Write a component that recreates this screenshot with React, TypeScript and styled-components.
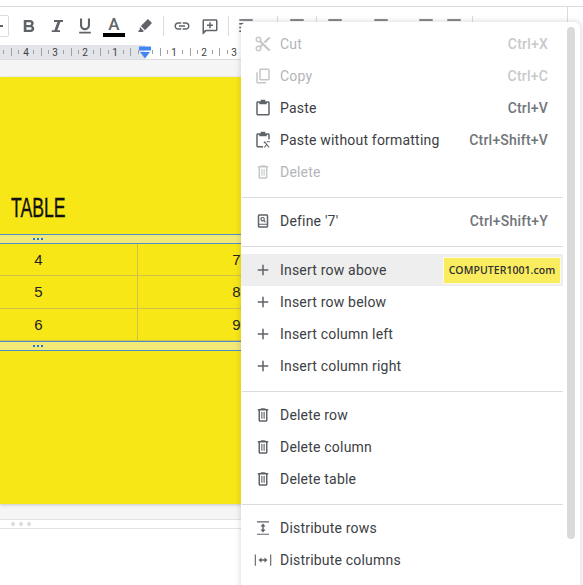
import styled, { createGlobalStyle } from "styled-components"

const GlobalStyle = createGlobalStyle`
    html, body {
        margin: 0;
        padding: 0;
        background: #fff;
        font-family: Roboto, "Liberation Sans", sans-serif;
    }
`

const Page = styled.div`
    position: relative;
    width: 583px;
    height: 585px;
    overflow: hidden;
    background: #fff;
`

const TopGap = styled.div`
    height: 6px;
    border-bottom: 1px solid #dadce0;
`

const Toolbar = styled.div`
    display: flex;
    align-items: center;
    height: 38px;
`

const ZoomBox = styled.div`
    width: 9px;
    height: 22px;
    box-sizing: border-box;
    margin-right: 6px;
    border: 1px solid #dadce0;
    border-left: none;
    border-radius: 0 2px 2px 0;
    display: flex;
    align-items: center;
    &::before {
        content: "";
        width: 3px;
        height: 2px;
        background: #5f6368;
    }
`

const ToolButton = styled.div<{ $after?: number; $size?: number }>`
    flex: none;
    width: 28px;
    height: 28px;
    margin-right: ${(p) => p.$after ?? 0}px;
    display: flex;
    align-items: center;
    justify-content: center;
    svg {
        width: ${(p) => p.$size ?? 18}px;
        height: ${(p) => p.$size ?? 18}px;
        fill: #5f6368;
    }
`

const ToolDivider = styled.div<{ $before: number; $after: number }>`
    flex: none;
    width: 1px;
    height: 20px;
    margin: 0 ${(p) => p.$after}px 0 ${(p) => p.$before}px;
    background: #dadce0;
`

const ToolEnd = styled.div`
    width: 94px;
    flex: none;
    align-self: stretch;
    border-right: 1px solid #dadce0;
`

const ColorA = styled.div`
    display: flex;
    flex-direction: column;
    align-items: center;
    font-size: 17px;
    font-weight: 500;
    line-height: 16px;
    color: #5f6368;
    &::after {
        content: "";
        display: block;
        width: 22px;
        height: 4px;
        margin-top: 1px;
        background: #000;
    }
`

const RulerBar = styled.div`
    width: 400px;
    height: 14px;
    border-bottom: 1px solid #dadce0;
    background: #fff;
    svg {
        display: block;
    }
`

const GrayGap = styled.div<{ $height: number }>`
    width: 400px;
    height: ${(p) => p.$height}px;
    background: #f5f5f6;
`

const YellowSheet = styled.div`
    width: 400px;
    height: 427px;
    background: #f7e717;
    overflow: hidden;
    box-shadow: 0 1px 3px rgba(60, 64, 67, 0.25);
    position: relative;
`

const Heading = styled.div`
    height: 157px;
    box-sizing: border-box;
    padding: 114px 0 0 11px;
    font-family: "Liberation Sans", Arial, sans-serif;
    font-size: 28px;
    line-height: 34px;
    color: #111;
    span {
        display: inline-block;
        transform: scaleX(0.63);
        transform-origin: left center;
        -webkit-text-stroke: 0.4px #111;
    }
`

const RowHandle = styled.div`
    height: 8px;
    padding-left: 33px;
    border-top: 1px solid #4a8fc9;
    border-bottom: 1px solid #4a8fc9;
    background: #f2e976;
    display: flex;
    align-items: center;
    &::before {
        content: "";
        width: 2px;
        height: 2px;
        background: #1a73e8;
        box-shadow: 4px 0 #1a73e8, 8px 0 #1a73e8;
    }
`

const TableGrid = styled.div`
    display: grid;
    grid-template-columns: 198px 198px;
    margin-left: -60px;
`

const Cell = styled.div`
    height: 32.33px;
    box-sizing: border-box;
    font-family: "Liberation Sans", Arial, sans-serif;
    font-size: 15px;
    line-height: 32px;
    text-align: center;
    color: #222;
    border-right: 1px solid #cfc24c;
    border-bottom: 1px solid #cfc24c;
`

const DotStrip = styled.div`
    height: 8px;
    border-top: 1px solid #e2e3e6;
    border-bottom: 1px solid #e2e3e6;
    display: flex;
    align-items: center;
    gap: 4px;
    padding-left: 11px;
    width: 400px;
    span {
        width: 4px;
        height: 4px;
        border-radius: 50%;
        background: #dadada;
    }
`

const Menu = styled.div`
    position: absolute;
    top: 22px;
    left: 241px;
    width: 339px;
    height: 580px;
    display: flex;
    background: #fff;
    border-radius: 6px;
    box-shadow: 0 0 4px 2px rgba(60, 64, 67, 0.13);
`

const MenuList = styled.div`
    width: 322px;
    flex: none;
    padding-top: 6px;
`

const MenuRow = styled.div<{ $disabled?: boolean; $active?: boolean }>`
    position: relative;
    display: flex;
    align-items: center;
    height: 32px;
    padding: 0 15px 0 13px;
    font-size: 14px;
    letter-spacing: 0.2px;
    color: ${(p) => (p.$disabled ? "#b4b5b7" : "#3c4043")};
    background: ${(p) => (p.$active ? "#eeeeee" : "transparent")};
    svg {
        flex: none;
        width: 18px;
        height: 18px;
        margin-right: 8px;
        fill: ${(p) => (p.$disabled ? "#c4c6c8" : "#5f6368")};
    }
`

const RowLabel = styled.span`
    flex: 1;
`

const Shortcut = styled.span<{ $disabled?: boolean }>`
    font-weight: 500;
    font-size: 14px;
    letter-spacing: 0.2px;
    color: ${(p) => (p.$disabled ? "#c8c9ca" : "#70757a")};
`

const MenuDivider = styled.div`
    height: 1px;
    margin: 9px 0 7px 1px;
    background: #dadce0;
`

const Watermark = styled.div`
    position: absolute;
    top: 3px;
    left: 202px;
    width: 118px;
    height: 27px;
    box-sizing: border-box;
    border: 1px solid #fffbe0;
    background: #f9ec5f;
    font-family: "Open Sans", "Noto Sans", sans-serif;
    font-size: 10.5px;
    font-weight: 600;
    letter-spacing: 0.05px;
    line-height: 25px;
    text-align: center;
    color: #333;
`

const ScrollThumb = styled.div`
    flex: none;
    width: 8px;
    height: 512px;
    margin: 5px 0 0 4px;
    border-radius: 4px;
    background: #dadada;
`

const Icon = ({ d }: { d: string }) => (
    <svg viewBox="0 0 24 24">
        <path fillRule="evenodd" d={d} />
    </svg>
)

const icons = {
    bold: "M5 4h8.500c2.700 0 4.800 1.900 4.800 4.400 0 1.400-.8 2.700-1.900 3.300 1.500.6 2.600 2 2.600 3.900 0 2.500-2.100 4.400-4.800 4.400H5V4zm3.500 3v3.500H13c1.100 0 1.900-.8 1.900-1.800S14.100 7 13 7H8.500zm0 6.500V17h5c1.200 0 2-.8 2-1.800s-.8-1.700-2-1.700h-5z",
    italic: "M8 4v2.500h4.500L8.500 17.500H5V20h11v-2.500h-3.500l4-11H20V4z",
    underline: "M12 17c3.300 0 6-2.700 6-6V3h-2.500v8c0 1.900-1.600 3.500-3.500 3.500S8.500 12.900 8.500 11V3H6v8c0 3.300 2.700 6 6 6zM5 19v2h14v-2H5z",
    marker: "M16.600 3.300l4.100 4.100c.4.400.4 1 0 1.400L12 17.500 6.500 12l8.700-8.700c.4-.4 1-.4 1.400 0zM5.500 13.500l5 5L9 20H3.500L3 18.800l2.500-2.500-.9-.9z",
    link: "M3.900 12c0-1.700 1.400-3.100 3.100-3.100h4V7H7c-2.800 0-5 2.200-5 5s2.200 5 5 5h4v-1.900H7c-1.700 0-3.100-1.400-3.100-3.100zM8 13h8v-2H8v2zm9-6h-4v1.900h4c1.700 0 3.100 1.400 3.100 3.100s-1.400 3.100-3.100 3.100h-4V17h4c2.800 0 5-2.200 5-5s-2.200-5-5-5z",
    comment: "M4 3h16c1.100 0 2 .9 2 2v12c0 1.100-.9 2-2 2H7l-4 4H2V5c0-1.100.9-2 2-2zm0 2v13.200L6.200 17H20V5H4zm7 2h2v3h3v2h-3v3h-2v-3H8v-2h3V7z",
    bars: "M3 3h18v2H3zM3 8h12v2H3zM3 13h18v2H3zM3 18h12v2H3z",
    cut: "M9.640 7.640c.23-.5.36-1.050.36-1.640 0-2.210-1.790-4-4-4S2 3.790 2 6s1.790 4 4 4c.59 0 1.140-.13 1.640-.36L10 12l-2.360 2.360C7.140 14.130 6.590 14 6 14c-2.210 0-4 1.790-4 4s1.790 4 4 4 4-1.790 4-4c0-.59-.13-1.140-.36-1.640L12 14l7 7h3v-1L9.640 7.640zM6 8c-1.100 0-2-.89-2-2s.9-2 2-2 2 .89 2 2-.9 2-2 2zm0 12c-1.100 0-2-.89-2-2s.9-2 2-2 2 .89 2 2-.9 2-2 2zM19 3l-6 6 2 2 7-7V3z",
    copy: "M9 2h10c1.100 0 2 .9 2 2v12c0 1.100-.9 2-2 2H9c-1.100 0-2-.9-2-2V4c0-1.100.9-2 2-2zm0 2v12h10V4H9zM3 7h2v13h11v2H5c-1.100 0-2-.9-2-2V7z",
    paste: "M9 1h6v2h4c1.100 0 2 .9 2 2v15c0 1.100-.9 2-2 2H5c-1.100 0-2-.9-2-2V5c0-1.100.9-2 2-2h4V1zM5 5v15h14V5h-2v2H7V5H5z",
    pastePlain: "M9 1h6v2h4c1.100 0 2 .9 2 2v6h-2V5h-2v2H7V5H5v15h7v2H5c-1.100 0-2-.9-2-2V5c0-1.100.9-2 2-2h4V1zM14.500 13.500l6.500 8.500h-1.800L17 19.100 14.800 22H13l3.100-4.100-1.100-1.500h-2v-1.800l1.500-1.100zM21 13.500v1.600h-3.500l-1-1.600H21z",
    trash: "M9.500 3h5l1 1H19v2h-1v13c0 1.100-.9 2-2 2H8c-1.100 0-2-.9-2-2V6H5V4h3.500l1-1zM8 6v13h8V6H8zm1.750 2h1.500v9h-1.500V8zm3 0h1.500v9h-1.500V8z",
    define: "M7 3h10c1.100 0 2 .9 2 2v14c0 1.100-.9 2-2 2H7c-1.100 0-2-.9-2-2V5c0-1.100.9-2 2-2zm0 2v10.500h10V5H7zm0 12v2h10v-2H7zm4.500-10.500a3 3 0 0 1 2.500 4.600l1.800 1.800-1.100 1.100-1.800-1.800a3 3 0 1 1-1.400-5.700zm0 1.600a1.400 1.400 0 1 0 0 2.800 1.400 1.400 0 0 0 0-2.800z",
    plus: "M11 5h2v6h6v2h-6v6h-2v-6H5v-2h6z",
    distRows: "M4 3h16v1.500H4zM4 19.500h16V21H4zM12 6l3.500 4H13v4h2.500L12 18l-3.500-4H11v-4H8.500z",
    distCols: "M1 4.500h1.500v15H1zM21.500 4.500H23v15h-1.500zM6 12l4-3.500V11h4V8.500l4 3.500-4 3.500V13h-4v2.500z",
}

const rulerLabels = [
    { x: 26, t: "4" },
    { x: 55, t: "3" },
    { x: 85, t: "2" },
    { x: 115, t: "1" },
    { x: 174, t: "1" },
    { x: 204, t: "2" },
    { x: 234, t: "3" },
    { x: 264, t: "4" },
]

const Ruler = () => {
    const ticks: number[] = []
    for (let x = 145 - 29.8 * 5; x < 300; x += 29.8 / 4) ticks.push(x)
    return (
        <svg width="400" height="14" viewBox="0 0 400 14">
            <rect x="0" y="0" width="145" height="14" fill="#e3e5e9" />
            {ticks.map((x, i) => {
                const n = i % 4
                if (n === 0) return null
                const h = n === 2 ? 8 : 4
                return <rect key={i} x={Math.round(x)} y={(14 - h) / 2} width="1" height={h} fill="#9aa0a6" />
            })}
            {rulerLabels.map((l) => (
                <text key={l.x} x={l.x} y="11" fontSize="10" textAnchor="middle" fill="#3c4043" fontFamily="Roboto, sans-serif">
                    {l.t}
                </text>
            ))}
            <rect x="139" y="1.500" width="12" height="4" fill="#4285f4" />
            <path d="M140 7h10l-5 6.500z" fill="#4285f4" />
        </svg>
    )
}

const rows = [
    ["4", "7"],
    ["5", "8"],
    ["6", "9"],
]

export default function App() {
    return (
        <Page>
            <GlobalStyle />
            <TopGap />
            <Toolbar>
                <ZoomBox />
                <ToolButton><Icon d={icons.bold} /></ToolButton>
                <ToolButton><Icon d={icons.italic} /></ToolButton>
                <ToolButton $after={1} $size={20}><Icon d={icons.underline} /></ToolButton>
                <ToolButton $after={3}><ColorA>A</ColorA></ToolButton>
                <ToolButton><Icon d={icons.marker} /></ToolButton>
                <ToolDivider $before={4} $after={4} />
                <ToolButton><Icon d={icons.link} /></ToolButton>
                <ToolButton><Icon d={icons.comment} /></ToolButton>
                <ToolDivider $before={4} $after={3} />
                <ToolButton $after={17}><Icon d={icons.bars} /></ToolButton>
                <ToolDivider $before={0} $after={5} />
                <ToolButton $after={5}><Icon d={icons.bars} /></ToolButton>
                <ToolDivider $before={0} $after={4} />
                <ToolButton $after={18}><Icon d={icons.bars} /></ToolButton>
                <ToolButton $after={17}><Icon d={icons.bars} /></ToolButton>
                <ToolButton><Icon d={icons.bars} /></ToolButton>
                <ToolButton $after={4}><Icon d={icons.bars} /></ToolButton>
                <ToolDivider $before={0} $after={0} />
                <ToolEnd />
            </Toolbar>
            <RulerBar><Ruler /></RulerBar>
            <GrayGap $height={17} />
            <YellowSheet>
                <Heading><span>TABLE</span></Heading>
                <RowHandle />
                <TableGrid>
                    {rows.map((r) => r.map((v) => <Cell key={v}>{v}</Cell>))}
                </TableGrid>
                <RowHandle />
            </YellowSheet>
            <GrayGap $height={15} />
            <DotStrip>
                <span /><span /><span />
            </DotStrip>

            <Menu>
                <MenuList>
                    <MenuRow $disabled><Icon d={icons.cut} /><RowLabel>Cut</RowLabel><Shortcut $disabled>Ctrl+X</Shortcut></MenuRow>
                    <MenuRow $disabled><Icon d={icons.copy} /><RowLabel>Copy</RowLabel><Shortcut $disabled>Ctrl+C</Shortcut></MenuRow>
                    <MenuRow><Icon d={icons.paste} /><RowLabel>Paste</RowLabel><Shortcut>Ctrl+V</Shortcut></MenuRow>
                    <MenuRow><Icon d={icons.pastePlain} /><RowLabel>Paste without formatting</RowLabel><Shortcut>Ctrl+Shift+V</Shortcut></MenuRow>
                    <MenuRow $disabled><Icon d={icons.trash} /><RowLabel>Delete</RowLabel></MenuRow>
                    <MenuDivider />
                    <MenuRow><Icon d={icons.define} /><RowLabel>Define '7'</RowLabel><Shortcut>Ctrl+Shift+Y</Shortcut></MenuRow>
                    <MenuDivider />
                    <MenuRow $active>
                        <Icon d={icons.plus} /><RowLabel>Insert row above</RowLabel>
                        <Watermark>COMPUTER1001.com</Watermark>
                    </MenuRow>
                    <MenuRow><Icon d={icons.plus} /><RowLabel>Insert row below</RowLabel></MenuRow>
                    <MenuRow><Icon d={icons.plus} /><RowLabel>Insert column left</RowLabel></MenuRow>
                    <MenuRow><Icon d={icons.plus} /><RowLabel>Insert column right</RowLabel></MenuRow>
                    <MenuDivider />
                    <MenuRow><Icon d={icons.trash} /><RowLabel>Delete row</RowLabel></MenuRow>
                    <MenuRow><Icon d={icons.trash} /><RowLabel>Delete column</RowLabel></MenuRow>
                    <MenuRow><Icon d={icons.trash} /><RowLabel>Delete table</RowLabel></MenuRow>
                    <MenuDivider />
                    <MenuRow><Icon d={icons.distRows} /><RowLabel>Distribute rows</RowLabel></MenuRow>
                    <MenuRow><Icon d={icons.distCols} /><RowLabel>Distribute columns</RowLabel></MenuRow>
                </MenuList>
                <ScrollThumb />
            </Menu>
        </Page>
    )
}
